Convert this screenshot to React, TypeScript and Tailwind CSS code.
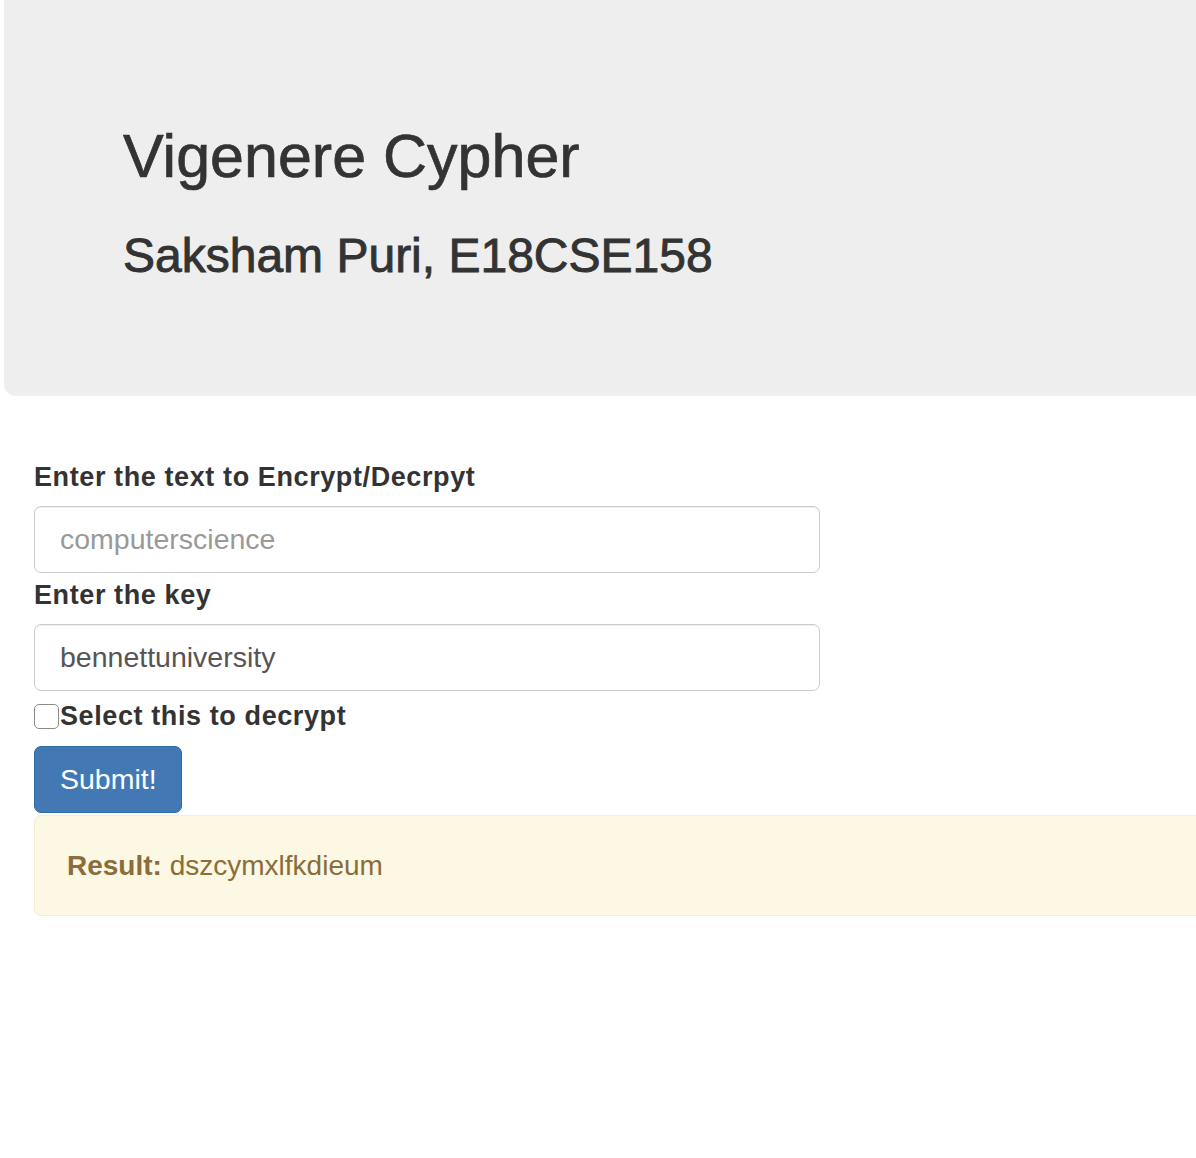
import { useState } from 'react';

export default function App() {
  const [text, setText] = useState('');
  const [key, setKey] = useState('bennettuniversity');
  const [decrypt, setDecrypt] = useState(false);

  return (
    <div className="min-h-[1158px] bg-white overflow-hidden text-[#333] font-['Liberation_Sans',Arial,sans-serif]">
      {/* Jumbotron */}
      <div className="ml-[4px] -mr-[40px] bg-[#eee] rounded-bl-[12px] pt-[123px] pb-[113px] pl-[119px]">
        <h1 className="text-[61px] leading-[1.1] font-normal [-webkit-text-stroke:0.7px_#333]">Vigenere Cypher</h1>
        <h2 className="mt-[40px] text-[48px] leading-[1.1] font-normal [-webkit-text-stroke:0.9px_#333]">
          Saksham Puri, E18CSE158
        </h2>
      </div>

      {/* Form */}
      <form className="pl-[34px] pt-[62px]" onSubmit={(e) => e.preventDefault()}>
        <label className="block text-[27px] leading-[38px] font-bold tracking-[0.6px]">
          Enter the text to Encrypt/Decrpyt
        </label>
        <input
          value={text}
          onChange={(e) => setText(e.target.value)}
          placeholder="computerscience"
          className="mt-[10px] block w-[786px] h-[67px] border border-[#ccc] rounded-[7px] pl-[25px] text-[28.5px] text-[#555] placeholder:text-[#999] shadow-[inset_0_1px_1px_rgba(0,0,0,0.075)] outline-none"
        />
        <label className="mt-[3px] block text-[27px] leading-[38px] font-bold tracking-[0.6px]">
          Enter the key
        </label>
        <input
          value={key}
          onChange={(e) => setKey(e.target.value)}
          className="mt-[10px] block w-[786px] h-[67px] border border-[#ccc] rounded-[7px] pl-[25px] text-[28.5px] text-[#555] shadow-[inset_0_1px_1px_rgba(0,0,0,0.075)] outline-none"
        />
        <div className="mt-[6px] flex items-center h-[38px]">
          <input
            type="checkbox"
            checked={decrypt}
            onChange={(e) => setDecrypt(e.target.checked)}
            className="appearance-none w-[25px] h-[25px] border-[1.5px] border-[#8a8a8a] rounded-[5px] bg-white shrink-0 mt-[1px]"
          />
          <span className="ml-[1px] text-[27px] leading-[38px] font-bold tracking-[0.6px]">Select this to decrypt</span>
        </div>
        <button
          type="submit"
          className="mt-[11px] block w-[148px] h-[67px] bg-[#4279b4] border border-[#2e6da4] rounded-[7px] pl-[25px] text-left text-[28.5px] text-white"
        >
          Submit!
        </button>
        <div className="mt-[2px] -mr-[40px] border-[1.5px] border-[#faebcc] bg-[#fcf8e3] rounded-[7px] pt-[31px] pb-[30px] pl-[32px] text-[#8a6d3b] text-[28px] leading-[38px]">
          <strong className="font-bold">Result:</strong> dszcymxlfkdieum
        </div>
      </form>
    </div>
  );
}
